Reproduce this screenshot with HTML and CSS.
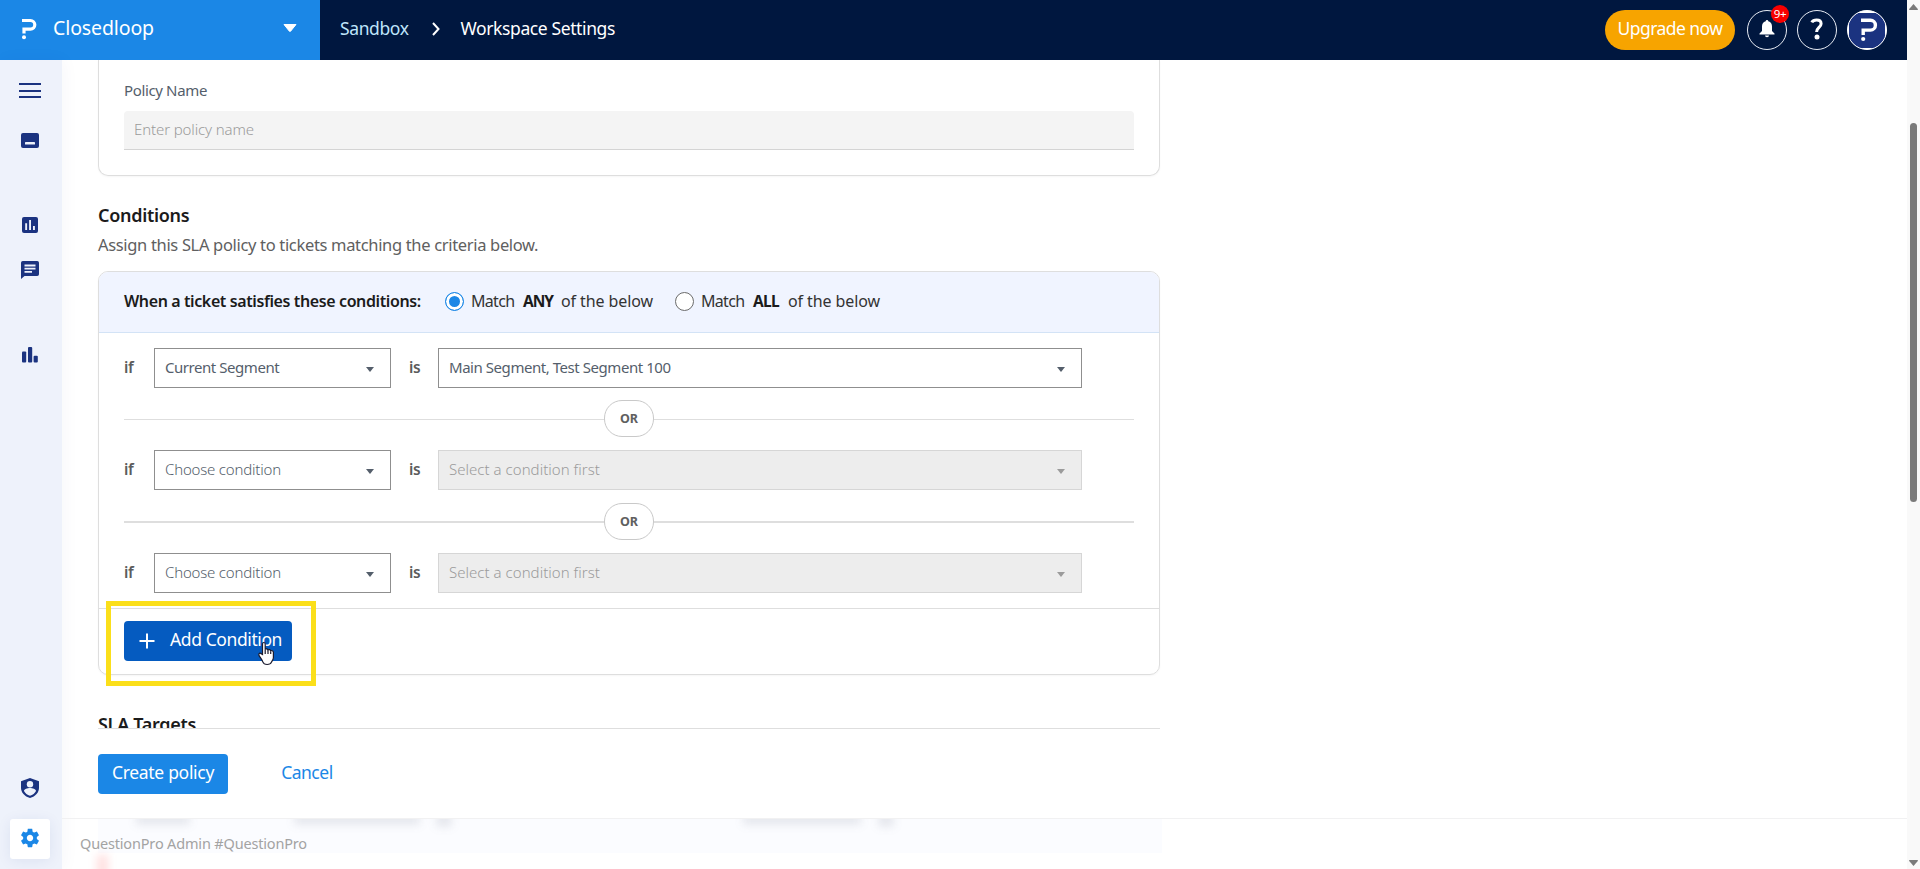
FILE: index.html
```html
<!DOCTYPE html>
<html lang="en">
<head>
    <meta charset="UTF-8">
    <meta name="viewport" content="width=device-width, initial-scale=1.0">
    <title>Workspace Settings</title>
    <link rel="stylesheet" href="styles.css">
</head>
<body>
    <div class="app">
        <header class="header">
            <div class="product">
                <svg class="product-logo" width="16" height="22" viewBox="0 0 16 22">
                    <path d="M1 2.5h8.5a4.3 4.3 0 0 1 0 8.6H3v4.4" fill="none" stroke="#fff" stroke-width="3.2"/>
                    <circle cx="3" cy="19.3" r="2" fill="#fff"/>
                </svg>
                <span class="product-name">Closedloop</span>
                <svg class="product-caret" width="14" height="8" viewBox="0 0 14 8"><path d="M1 .5h12L7.6 7.2q-.6.7-1.2 0z" fill="#fff" stroke="#fff" stroke-linejoin="round"/></svg>
            </div>
            <nav class="breadcrumb">
                <a class="crumb">Sandbox</a>
                <svg width="8" height="14" viewBox="0 0 8 14"><path d="M1 1l5.5 6L1 13" fill="none" stroke="#fff" stroke-width="2"/></svg>
                <span class="crumb current">Workspace Settings</span>
            </nav>
            <div class="header-actions">
                <button class="upgrade">Upgrade now</button>
                <div class="round">
                    <svg width="16" height="18" viewBox="0 0 16 18">
                        <path d="M8 0c.8 0 1.300.6 1.300 1.300C12 2 13 4.200 13 6.500V11l2.500 2.500V14.500H.5V13.500L3 11V6.500C3 4.200 4 2 6.700 1.300 6.700.6 7.200 0 8 0z" fill="#fff"/>
                        <path d="M6 15.500h4a2 1.800 0 0 1-4 0z" fill="#fff"/>
                    </svg>
                    <span class="badge">9+</span>
                </div>
                <div class="round">
                    <svg width="14" height="24" viewBox="0 0 14 24">
                        <path d="M1.800 5.400C2.700 3.600 4.500 2.900 6.600 2.900c2.800 0 4.500 1.400 4.500 3.800 0 3.600-4.500 4-4.500 8.300" fill="none" stroke="#fff" stroke-width="3"/>
                        <circle cx="7" cy="20" r="2.500" fill="#fff"/>
                    </svg>
                </div>
                <div class="round avatar">
                    <svg width="18" height="24" viewBox="0 0 18 24">
                        <path d="M1 2.300h9.500a4.900 4.900 0 0 1 0 9.800H3.200v4.900" fill="none" stroke="#fff" stroke-width="3.400"/>
                        <circle cx="3.200" cy="21" r="2.100" fill="#fff"/>
                    </svg>
                </div>
            </div>
        </header>

        <div class="body">
            <aside class="sidebar">
                <div class="menu-toggle"><span></span><span></span><span></span></div>
                <svg class="nav-icon nav-dashboard" width="18" height="15" viewBox="0 0 18 15">
                    <rect width="18" height="15" rx="2" fill="#1b3380"/>
                    <rect x="4" y="9" width="10" height="2.600" rx=".6" fill="#eef2fb"/>
                </svg>
                <svg class="nav-icon nav-reports" width="16" height="16" viewBox="0 0 16 16">
                    <rect width="16" height="16" rx="2" fill="#1b3380"/>
                    <path d="M3.200 6.200h1.900v6.800H3.200zM7.100 3.100H9v9.900H7.100zM11 9h1.900v4H11z" fill="#eef2fb"/>
                </svg>
                <svg class="nav-icon nav-tickets" width="18" height="18" viewBox="0 0 18 18">
                    <path d="M1.800 0h14.400Q18 0 18 1.800v11.400q0 1.800-1.800 1.800H3.500L0 18V1.800Q0 0 1.800 0z" fill="#1b3380"/>
                    <path d="M3.500 3.500h11v1.900h-11zM3.500 6.700h11v1.900h-11zM3.500 9.900h7.500v1.900H3.500z" fill="#eef2fb"/>
                </svg>
                <svg class="nav-icon nav-analytics" width="16" height="16" viewBox="0 0 16 16">
                    <rect y="4.500" width="4.200" height="11" rx="1" fill="#1b3380"/>
                    <rect x="6" width="4.200" height="15.500" rx="1" fill="#1b3380"/>
                    <rect x="11.600" y="8.800" width="4.200" height="6.700" rx="1" fill="#1b3380"/>
                </svg>
                <svg class="nav-icon nav-admin" width="18" height="20" viewBox="0 0 18 20">
                    <path d="M9 0l9 3.300v6.500c0 4.700-3.500 8.700-9 10.200C3.500 18.500 0 14.500 0 9.800V3.300z" fill="#1b3380"/>
                    <circle cx="9" cy="6.300" r="3.200" fill="#eef2fb"/>
                    <path d="M3 13c0-2.100 3.500-3 6-3s6 .9 6 3c-1.100 2.300-3.300 4-6 4.800-2.700-.8-4.900-2.500-6-4.800z" fill="#eef2fb"/>
                </svg>
                <div class="nav-active">
                    <svg width="24" height="24" viewBox="0 0 24 24">
                        <path d="M19.430 12.980c.040-.320.070-.640.070-.980s-.030-.660-.070-.980l2.110-1.650c.190-.150.240-.420.120-.640l-2-3.460c-.120-.220-.390-.300-.610-.220l-2.490 1c-.520-.400-1.080-.730-1.690-.980l-.380-2.650C14.460 2.180 14.250 2 14 2h-4c-.250 0-.460.180-.490.420l-.380 2.650c-.610.250-1.170.590-1.690.980l-2.490-1c-.230-.090-.490 0-.610.220l-2 3.460c-.130.220-.070.490.120.640l2.110 1.650c-.040.320-.070.650-.070.980s.030.660.070.980l-2.110 1.650c-.190.150-.240.420-.120.640l2 3.460c.120.220.390.300.610.220l2.490-1c.520.400 1.080.730 1.690.980l.380 2.650c.030.240.240.420.490.420h4c.250 0 .460-.180.490-.420l.380-2.650c.610-.250 1.170-.590 1.690-.980l2.490 1c.230.090.490 0 .610-.220l2-3.460c.120-.220.070-.490-.120-.640l-2.110-1.650zM12 15.500c-1.930 0-3.500-1.570-3.500-3.500s1.570-3.500 3.500-3.500 3.500 1.570 3.500 3.500-1.570 3.500-3.500 3.500z" fill="#1b87e6"/>
                    </svg>
                </div>
            </aside>

            <main class="main">
                <div class="content">
                    <section class="card policy-card">
                        <label class="field-label">Policy Name</label>
                        <div class="text-input">Enter policy name</div>
                    </section>

                    <h2 class="title">Conditions</h2>
                    <p class="subtitle">Assign this SLA policy to tickets matching the criteria below.</p>

                    <section class="card">
                        <div class="match-bar">
                            <span class="match-title">When a ticket satisfies these conditions:</span>
                            <div class="option">
                                <span class="radio checked"></span>
                                <span class="match-word">Match</span>
                                <b class="any">ANY</b>
                                <span class="match-rest">of the below</span>
                            </div>
                            <div class="option">
                                <span class="radio"></span>
                                <span class="match-word">Match</span>
                                <b>ALL</b>
                                <span class="match-rest">of the below</span>
                            </div>
                        </div>

                        <div class="conditions">
                            <div class="row">
                                <span class="word-if">if</span>
                                <div class="select select-small">Current Segment<i class="caret"></i></div>
                                <span class="word-is">is</span>
                                <div class="select select-large">Main Segment, Test Segment 100<i class="caret"></i></div>
                            </div>
                            <div class="divider"><span>OR</span></div>
                            <div class="row">
                                <span class="word-if">if</span>
                                <div class="select select-small empty">Choose condition<i class="caret"></i></div>
                                <span class="word-is">is</span>
                                <div class="select select-large disabled">Select a condition first<i class="caret"></i></div>
                            </div>
                            <div class="divider thick"><span>OR</span></div>
                            <div class="row">
                                <span class="word-if">if</span>
                                <div class="select select-small empty">Choose condition<i class="caret"></i></div>
                                <span class="word-is">is</span>
                                <div class="select select-large disabled">Select a condition first<i class="caret"></i></div>
                            </div>
                        </div>

                        <div class="card-footer">
                            <button class="btn btn-add">
                                <svg width="16" height="16" viewBox="0 0 16 16"><path d="M8 .5v15M.5 8h15" stroke="#fff" stroke-width="2"/></svg>
                                Add Condition
                            </button>
                            <div class="highlight"></div>
                            <svg class="cursor" width="19" height="25" viewBox="0 0 19 25">
                                <path d="M5.500 13.500V3c0-2 2.700-2 2.700 0v5.500c.5-1 2.600-.8 2.800.6.700-.9 2.500-.5 2.700.8.900-.8 2.600-.2 2.700 1.400v5.200c0 2.300-1.400 3.300-1.900 4.600-.6 1.500-2 2.400-4.400 2.400-2.300 0-3.700-1-4.300-2.600-.8-2.100-2.200-3.900-3.700-6.200-.8-1.600.3-2.900 1.600-2.300z" fill="#fff" stroke="#1a1a2e" stroke-width="1.200"/>
                                <path d="M8.200 8.500v4.500M11 9.500v3.500M13.700 10.500v2.500" stroke="#1a1a2e" stroke-width="1.200"/>
                            </svg>
                        </div>
                    </section>

                    <h2 class="title targets">SLA Targets</h2>
                </div>

                <div class="actions">
                    <button class="btn btn-primary">Create policy</button>
                    <button class="btn btn-link">Cancel</button>
                </div>

                <footer class="footer">
                    <div class="under-panel"></div>
                    <div class="smudges">
                        <i class="smudge s1"></i>
                        <i class="smudge s2"></i>
                        <i class="smudge s3"></i>
                        <i class="smudge s4"></i>
                        <i class="smudge s5"></i>
                        <i class="smudge red"></i>
                    </div>
                    <span class="footer-text">QuestionPro Admin #QuestionPro</span>
                </footer>
            </main>
        </div>

        <div class="scrollbar">
            <svg width="9" height="6" viewBox="0 0 9 6"><path d="M4.500 0L9 5.200q0 .8-.8.800H.8Q0 6 0 5.200z" fill="#7a7a7a"/></svg>
            <div class="thumb"></div>
            <svg class="arrow-down" width="9" height="6" viewBox="0 0 9 6"><path d="M4.500 6L9 .8Q9 0 8.200 0H.8Q0 0 0 .8z" fill="#7a7a7a"/></svg>
        </div>
    </div>
</body>
</html>
```
FILE: styles.css
```css
* {
    box-sizing: border-box;
}

body {
    margin: 0;
    font-family: "Noto Sans", "Open Sans", sans-serif;
    color: #1b1b1b;
    background: #fff;
    overflow: hidden;
}

button {
    font-family: inherit;
    border: none;
}

svg {
    flex: none;
}

.app {
    display: grid;
    grid-template-columns: 1fr 13px;
    grid-template-rows: 60px 809px;
    height: 869px;
}

/* Header */
.header {
    display: flex;
    background: #00173f;
    color: #fff;
}

.product {
    width: 320px;
    display: flex;
    align-items: center;
    background: #1b87e6;
    padding: 0 23px 0 21px;
}

.product-logo {
    margin-top: -3px;
}

.product-name {
    flex: 1;
    margin: 0 0 5px 16px;
    font-size: 19.5px;
    letter-spacing: -0.11px;
}

.product-caret {
    margin-bottom: 4px;
}

.breadcrumb {
    flex: 1;
    display: flex;
    align-items: center;
    padding: 0 0 4px 20px;
    font-size: 17.5px;
    letter-spacing: -0.39px;
}

.breadcrumb svg {
    margin: 2px 21px 0 23px;
}

.crumb {
    color: #bfe5fb;
}

.crumb.current {
    color: #fff;
}

.header-actions {
    display: flex;
    align-items: center;
    gap: 10px;
    padding-right: 20px;
}

.upgrade {
    width: 130px;
    height: 40px;
    margin-right: 2px;
    padding: 0 0 4px;
    border-radius: 20px;
    background: #f7a400;
    color: #fff;
    font-size: 17.5px;
    letter-spacing: -0.55px;
}

.round {
    position: relative;
    width: 40px;
    height: 40px;
    display: flex;
    align-items: center;
    justify-content: center;
    border: 1px solid #e8ecf4;
    border-radius: 50%;
}

.round > svg {
    margin-top: -2px;
}

.avatar {
    border-color: #fff;
    background: #fff linear-gradient(#1b3380, #1b3380) center / 36px 35px no-repeat;
}

.avatar > svg {
    margin: 0 0 1px 3px;
}

.badge {
    position: absolute;
    top: -6px;
    right: -3px;
    width: 18px;
    height: 18px;
    border-radius: 50%;
    background: #f80000;
    color: #fff;
    font-size: 11.5px;
    line-height: 18px;
    text-align: center;
    letter-spacing: -0.3px;
}

/* Sidebar */
.body {
    grid-row: 2;
    display: flex;
}

.sidebar {
    width: 62px;
    flex: none;
    display: flex;
    flex-direction: column;
    padding: 23px 0 10px;
    background: #eef2fb;
    box-shadow: 2px 0 16px rgba(27, 51, 128, 0.04);
}

.menu-toggle {
    display: flex;
    flex-direction: column;
    gap: 4.5px;
    margin: 0 0 35px 19px;
}

.menu-toggle span {
    width: 22px;
    height: 2px;
    background: #1b3380;
}

.nav-icon {
    margin-left: 21px;
}

.nav-reports {
    margin: 69px 0 28px 22px;
}

.nav-analytics {
    margin: 68px 0 0 22px;
}

.nav-admin {
    margin-top: auto;
}

.nav-active {
    width: 40px;
    height: 40px;
    margin: 21px 0 0 10px;
    padding-bottom: 2px;
    display: flex;
    align-items: center;
    justify-content: center;
    background: #fff;
    border-radius: 3px;
    box-shadow: 0 2px 14px rgba(27, 51, 128, 0.08);
}

.nav-active svg {
    width: 22px;
    height: 22px;
}

/* Content */
.main {
    flex: 1;
    display: flex;
    flex-direction: column;
}

.content {
    height: 668px;
    padding: 0 0 0 36px;
    overflow: hidden;
}

.card {
    width: 1062px;
    border: 1px solid #dedede;
    border-radius: 10px;
    box-shadow: 0 1px 2px rgba(0, 0, 0, 0.04);
}

.policy-card {
    height: 116px;
    padding: 20px 25px 0;
    border-top: none;
    border-radius: 0 0 10px 10px;
}

.field-label {
    display: block;
    height: 31px;
    font-size: 15px;
    line-height: 20px;
    color: #545e6b;
    letter-spacing: -0.36px;
}

.text-input {
    height: 39px;
    padding-left: 10px;
    border-bottom: 1px solid #d4d4d4;
    border-radius: 4px 4px 0 0;
    background: #f4f4f4;
    color: #9b9b9b;
    font-size: 15px;
    font-weight: 300;
    line-height: 37px;
    letter-spacing: -0.12px;
}

.title {
    margin: 26px 0 0;
    font-size: 18px;
    font-weight: 600;
    line-height: 26px;
    letter-spacing: -0.3px;
}

.subtitle {
    margin: 5px 0 15px;
    color: #606060;
    font-size: 16.5px;
    line-height: 23px;
    letter-spacing: -0.33px;
}

.match-bar {
    height: 61px;
    display: flex;
    align-items: center;
    padding: 0 25px 2px;
    border-bottom: 1px solid #d3e3f6;
    border-radius: 9px 9px 0 0;
    background: #f0f4ff;
    font-size: 16px;
}

.match-title {
    width: 321px;
    padding-bottom: 1px;
    font-size: 16px;
    font-weight: 600;
    letter-spacing: -0.39px;
    white-space: nowrap;
}

.option {
    display: flex;
    align-items: center;
    margin-right: 22px;
    color: #333;
}

.option b {
    color: #1b1b1b;
    width: 35px;
    font-size: 15.5px;
    letter-spacing: -0.7px;
}

.option .any {
    width: 38px;
    letter-spacing: -1px;
}

.radio {
    width: 19px;
    height: 19px;
    margin-right: 7px;
    border: 1px solid #6b6b6b;
    border-radius: 50%;
    background: #fff;
}

.radio.checked {
    border: 1px solid #1b87e6;
    background: #1b87e6;
    box-shadow: inset 0 0 0 3px #fff;
}

.match-word {
    width: 52px;
    letter-spacing: -0.7px;
}

.match-rest {
    width: 92px;
    letter-spacing: -0.1px;
    white-space: nowrap;
}

.conditions {
    padding: 15px 25px 15px;
}

.row {
    display: flex;
    align-items: center;
    height: 40px;
}

.word-if,
.word-is {
    width: 30px;
    padding-bottom: 3px;
    color: #5c5c5c;
    font-size: 15.5px;
    font-weight: 600;
    letter-spacing: -0.27px;
}

.word-is {
    margin-left: 18px;
    width: 29px;
}

.select {
    display: flex;
    align-items: center;
    justify-content: space-between;
    height: 40px;
    padding: 0 16px 2px 10px;
    border: 1px solid #8f8f8f;
    background: #fff;
    color: #545e6b;
    font-size: 15px;
    letter-spacing: -0.45px;
}

.select-small {
    width: 237px;
}

.select-large {
    width: 644px;
}

.select.empty {
    font-weight: 300;
    letter-spacing: -0.19px;
}

.select.disabled {
    border-color: #d6d6d6;
    background: #ededed;
    color: #9b9b9b;
    font-weight: 300;
    letter-spacing: 0.03px;
}

.caret {
    margin-top: 4px;
    border: 4.5px solid transparent;
    border-top: 5px solid #545e6b;
    border-bottom: none;
}

.disabled .caret {
    border-top-color: #9b9b9b;
}

.divider {
    display: flex;
    align-items: center;
    height: 37px;
    margin: 12px 0 13px;
}

.divider::before,
.divider::after {
    content: "";
    flex: 1;
    height: 1px;
    margin-top: 1px;
    background: #dedede;
}

.divider.thick {
    margin-top: 13px;
}

.divider.thick::before,
.divider.thick::after {
    height: 2px;
}

.divider span {
    width: 50px;
    height: 37px;
    border: 1px solid #c9c9c9;
    border-radius: 18px;
    color: #606060;
    font-size: 12.5px;
    font-weight: 700;
    line-height: 35px;
    text-align: center;
}

.card-footer {
    position: relative;
    display: flex;
    height: 66px;
    padding: 12px 25px;
    border-top: 1px solid #dedede;
}

.btn {
    height: 40px;
    padding: 0 0 4px;
    border-radius: 4px;
    font-size: 17.5px;
    color: #fff;
}

.btn-add {
    display: flex;
    align-items: center;
    gap: 15px;
    width: 168px;
    padding-left: 15px;
    background: #055bc0;
    letter-spacing: -0.4px;
    white-space: nowrap;
}

.btn-add svg {
    margin-top: 4px;
}

.highlight {
    position: absolute;
    left: 7px;
    top: -8px;
    width: 210px;
    height: 85px;
    border: 5px solid #fbdf1a;
}

.cursor {
    position: absolute;
    left: 158px;
    top: 32px;
}

.targets {
    margin-top: 36px;
}

/* Bottom bars */
.actions {
    width: 1062px;
    height: 90px;
    margin-left: 36px;
    padding-top: 25px;
    border-top: 1px solid #dedede;
}

.btn-primary {
    width: 130px;
    background: #1b87e6;
    letter-spacing: -0.31px;
}

.btn-link {
    margin-left: 49px;
    background: none;
    color: #1b87e6;
    letter-spacing: -0.5px;
}

.footer {
    position: relative;
    height: 51px;
    padding-left: 18px;
    border-top: 1px solid #f1f1f2;
    overflow: hidden;
}

.footer-text {
    position: relative;
    color: #a3a3a3;
    font-size: 14.5px;
    line-height: 49px;
    letter-spacing: -0.17px;
}

/* Page content blurred under the footer */
.under-panel {
    position: absolute;
    left: 36px;
    top: 0;
    width: 1064px;
    height: 34px;
    background: #fbfcff;
}

.smudge {
    position: absolute;
    top: -6px;
    height: 12px;
    background: rgba(60, 70, 100, 0.11);
    filter: blur(4px);
}

.s1 { left: 74px; width: 54px; }
.s2 { left: 232px; width: 126px; }
.s3 { left: 374px; width: 16px; height: 14px; }
.s4 { left: 681px; width: 118px; }
.s5 { left: 816px; width: 16px; height: 14px; }

.smudge.red {
    left: 35px;
    top: 36px;
    width: 11px;
    height: 26px;
    background: rgba(255, 60, 60, 0.16);
}

/* Scrollbar */
.scrollbar {
    grid-column: 2;
    grid-row: 1 / 3;
    display: flex;
    flex-direction: column;
    align-items: center;
    padding: 4px 0 3px;
    background: #f9f9f9;
}

.thumb {
    width: 7px;
    height: 379px;
    margin-top: 113px;
    border-radius: 4px;
    background: #7a7a7a;
}

.arrow-down {
    margin-top: auto;
}
```
